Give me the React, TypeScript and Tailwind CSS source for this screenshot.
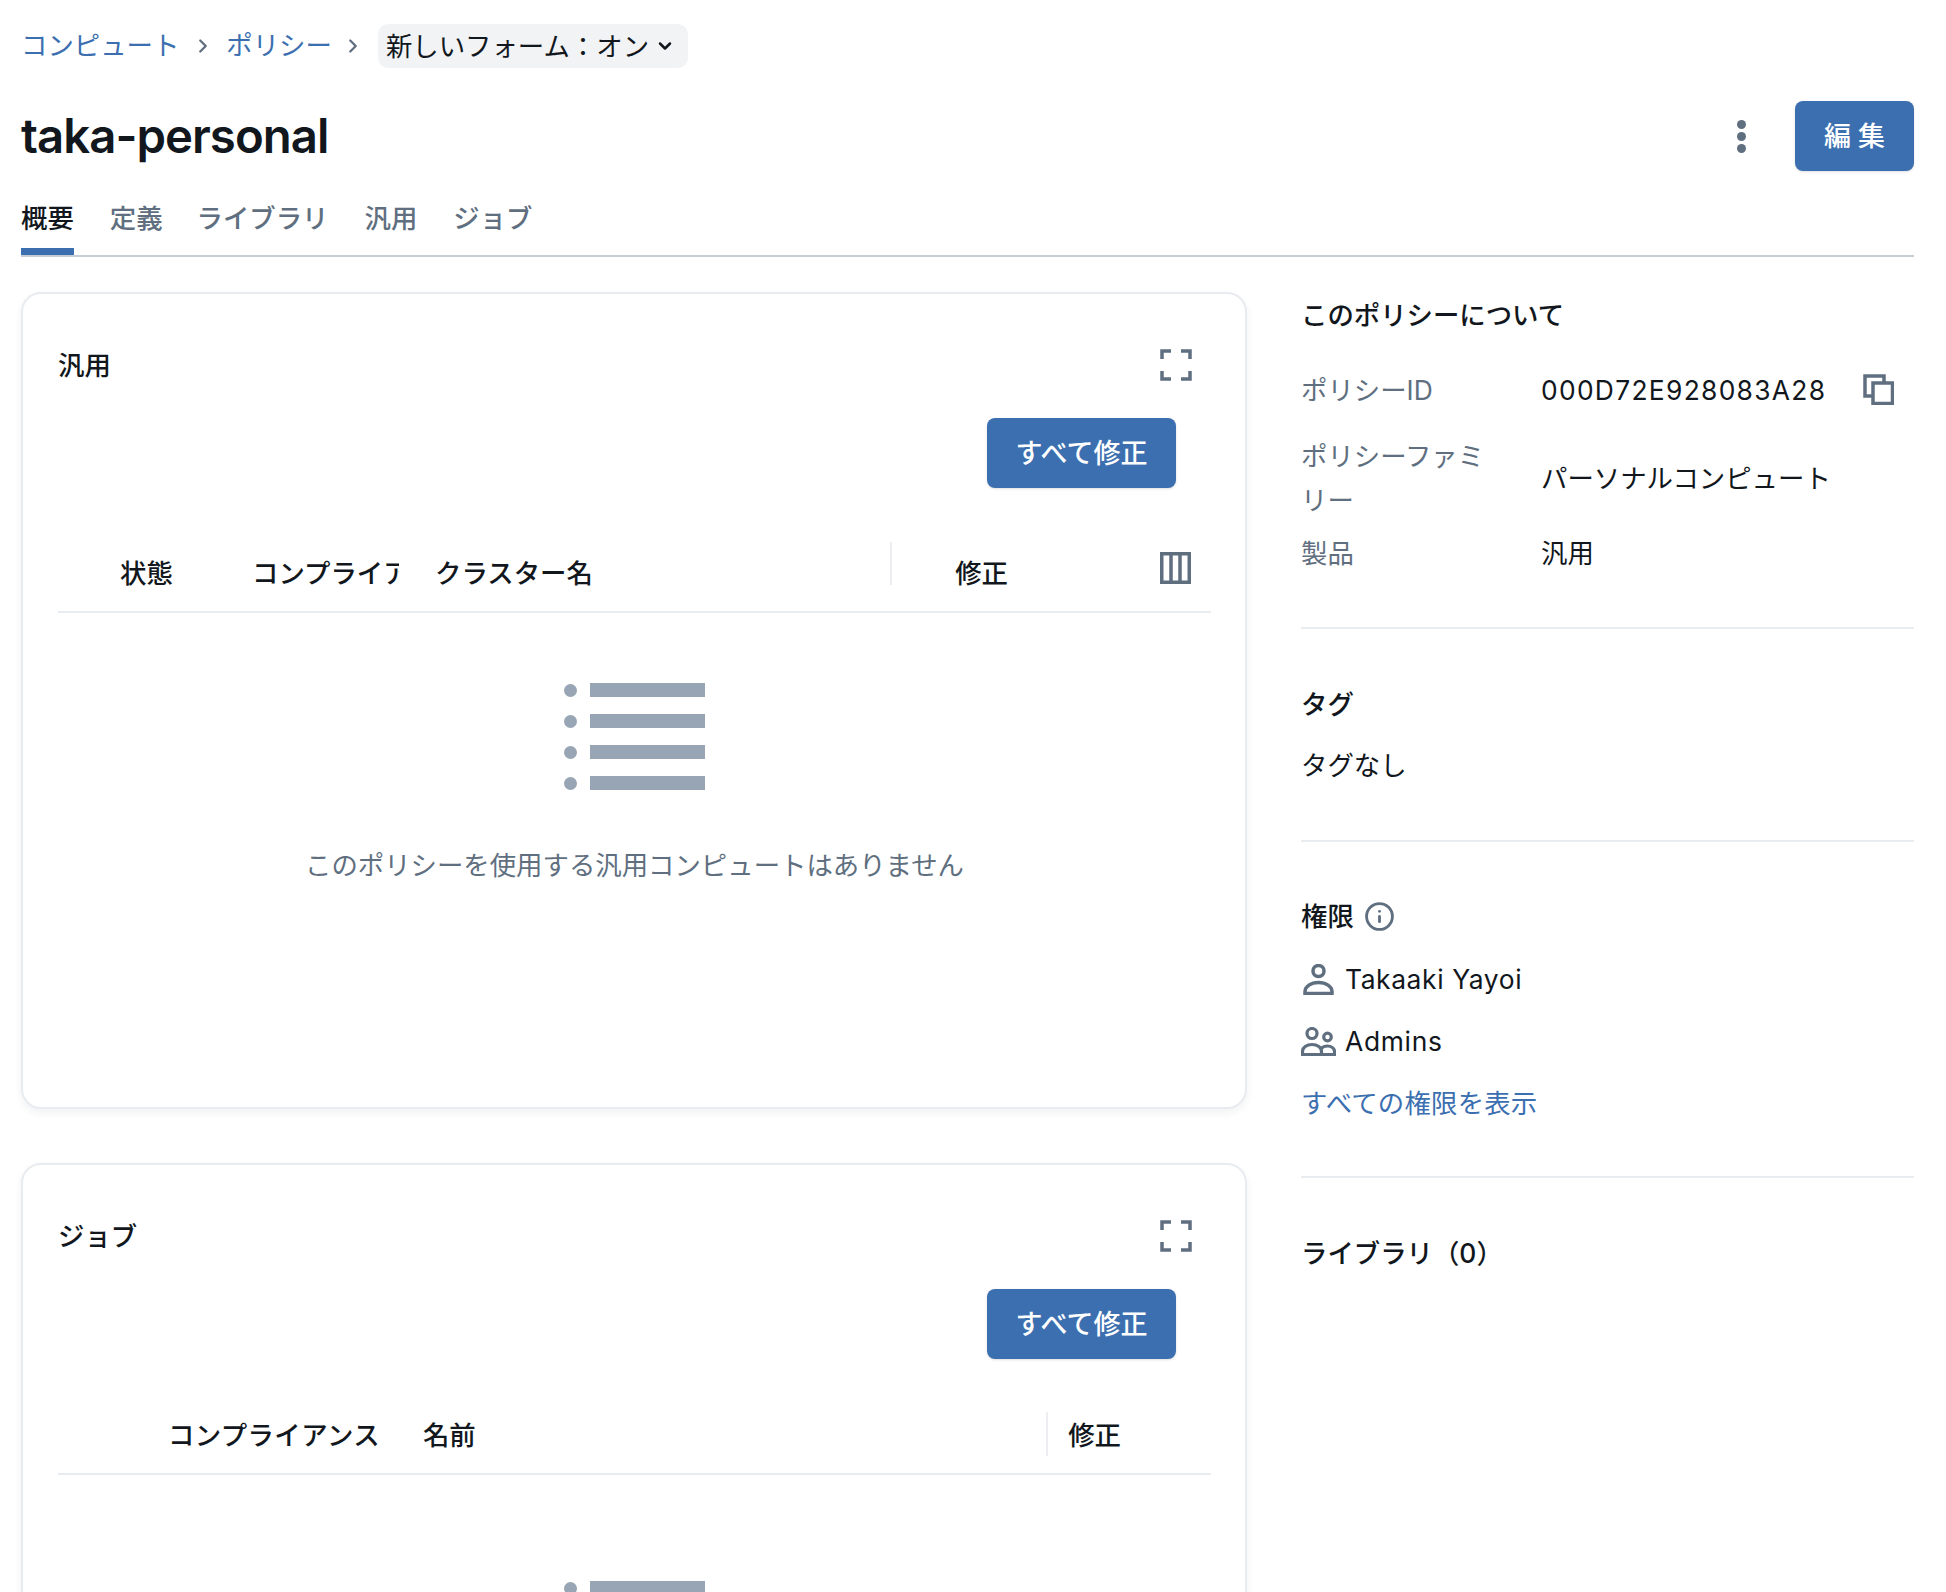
import { ChevronDown, ChevronRight, Info } from 'lucide-react'

const Expand = () => (
  <svg width="32" height="32" viewBox="0 0 32 32" fill="none" stroke="#5f6f80" strokeWidth="3.5">
    <path d="M2 10V2h9M21 2h9v8M30 22v8h-9M11 30H2v-8" />
  </svg>
)

const Columns = () => (
  <svg width="31" height="32" viewBox="0 0 31 32" fill="none" stroke="#5f6f80" strokeWidth="3.5">
    <rect x="1.75" y="1.75" width="27.5" height="28.5" />
    <path d="M11 2v28M20 2v28" />
  </svg>
)

const Copy = () => (
  <svg width="31" height="31" viewBox="0 0 31 31" fill="none" stroke="#5f6f80" strokeWidth="3.5">
    <path d="M9 22H2V2h19v7" />
    <rect x="10" y="9" width="19.5" height="20.5" />
  </svg>
)

const Person = () => (
  <svg width="31" height="31" viewBox="0 0 31 31" fill="none" stroke="#5f6f80" strokeWidth="3.5">
    <circle cx="15.5" cy="7" r="5.5" />
    <path d="M2 29.5v-2c0-5 6-9 13.5-9s13.5 4 13.5 9v2z" />
  </svg>
)

const Group = () => (
  <svg width="35" height="29" viewBox="0 0 35 29" fill="none" stroke="#5f6f80" strokeWidth="3.2">
    <circle cx="11" cy="6.5" r="5" />
    <circle cx="26.5" cy="10" r="3.8" />
    <path d="M1.5 27.5v-3c0-4 4-7 9.5-7s9.5 3 9.5 7v3z" />
    <path d="M20.5 27.5h13v-3c0-3-3-5.500-7-5.500-3 0-5 1-6.500 2.500" />
  </svg>
)

function EmptyList({ className, text }: { className: string; text: string }) {
  return (
    <div className={`flex flex-col items-center ${className}`}>
      <div className="flex flex-col gap-[17px]">
        {[0, 1, 2, 3].map((i) => (
          <div key={i} className="flex items-center gap-[13px]">
            <div className="w-[13px] h-[13px] rounded-full bg-[#97a5b4]" />
            <div className="w-[115px] h-[14px] bg-[#97a5b4]" />
          </div>
        ))}
      </div>
      <p className="mt-[53px] text-[#5f6f80]">{text}</p>
    </div>
  )
}

function Card({
  title,
  headClass,
  buttonClass,
  children,
}: {
  title: string
  headClass: string
  buttonClass: string
  children: React.ReactNode
}) {
  return (
    <section className="bg-white border-2 border-[#e8ebef] rounded-[20px] shadow-[0_4px_8px_rgba(20,40,70,0.06)] pl-[35px] pr-[34px] pb-[220px]">
      <div className={`flex items-center justify-between h-[44px] pr-[19px] ${headClass}`}>
        <h2 className="font-medium">{title}</h2>
        <Expand />
      </div>
      <div className={`flex justify-end pr-[35px] ${buttonClass}`}>
        <button className="w-[189px] h-[70px] pt-[2px] rounded-lg bg-[#3c6fb0] text-white text-[27px] font-medium shadow-sm">
          すべて修正
        </button>
      </div>
      {children}
    </section>
  )
}

export default function App() {
  return (
    <div className="h-[1592px] overflow-hidden bg-white pl-[21px] pr-[32px] pt-[24px] text-[26.4px] leading-[44px] text-[#11171c] font-['Inter','Noto_Sans_CJK_JP',sans-serif]">
      {/* Breadcrumb */}
      <nav className="flex items-center h-[44px]">
        <a className="text-[#3c6fb0] -mt-[2px]">コンピュート</a>
        <ChevronRight size={22} strokeWidth={2.5} className="ml-[13px] mr-[12px] text-[#5f6f80]" />
        <a className="text-[#3c6fb0] -mt-[2px]">ポリシー</a>
        <ChevronRight size={22} strokeWidth={2.5} className="ml-[10px] mr-[14px] text-[#5f6f80]" />
        <div className="flex items-center h-[44px] w-[310px] pl-[8px] pb-[1px] rounded-[10px] bg-[#f1f3f5]">
          新しいフォーム：オン
          <ChevronDown size={20} strokeWidth={3} className="ml-[6px]" />
        </div>
      </nav>

      {/* Title */}
      <div className="flex items-center justify-between h-[70px] mt-[33px]">
        <h1 className="text-[47.3px] font-semibold tracking-[-0.02em]">taka-personal</h1>
        <div className="flex items-center">
          <div className="flex flex-col gap-[3px] mr-[49px]">
            <div className="w-[9px] h-[9px] rounded-full bg-[#5f6f80]" />
            <div className="w-[9px] h-[9px] rounded-full bg-[#5f6f80]" />
            <div className="w-[9px] h-[9px] rounded-full bg-[#5f6f80]" />
          </div>
          <button className="w-[119px] h-[70px] pt-[2px] rounded-lg bg-[#3c6fb0] text-white text-[27px] font-medium shadow-sm">
            編 集
          </button>
        </div>
      </div>

      {/* Tabs */}
      <div className="flex gap-9 mt-[25px] border-b-2 border-[#c5ced8] font-medium">
        <div className="h-[59px] border-b-[7px] border-[#3c6fb0]">概要</div>
        <div className="h-[59px] text-[#5f6f80]">定義</div>
        <div className="h-[59px] -ml-[2px] text-[#5f6f80]">ライブラリ</div>
        <div className="h-[59px] text-[#5f6f80]">汎用</div>
        <div className="h-[59px] text-[#5f6f80]">ジョブ</div>
      </div>

      <div className="flex gap-[54px] mt-[35px]">
        {/* Left column */}
        <div className="w-[1226px] shrink-0 flex flex-col gap-[54px]">
          <Card title="汎用" headClass="mt-[49px]" buttonClass="mt-[31px]">
            <div className="flex items-start h-[71px] mt-[54px] border-b-2 border-[#e8ebef] font-medium">
              <div className="w-[194px] pl-[62px] mt-[9px]">状態</div>
              <div className="w-[147px] overflow-hidden whitespace-nowrap mt-[9px]">コンプライアンス</div>
              <div className="flex-1 ml-[36px] mt-[9px]">クラスター名</div>
              <div className="w-[2px] h-[43px] bg-[#eceef1]" />
              <div className="ml-[63px] mt-[9px]">修正</div>
              <div className="ml-[152px] mr-[20px] mt-[10px]">
                <Columns />
              </div>
            </div>
            <EmptyList className="mt-[70px]" text="このポリシーを使用する汎用コンピュートはありません" />
          </Card>
          <Card title="ジョブ" headClass="mt-[49px]" buttonClass="mt-[31px]">
            <div className="flex items-start h-[63px] mt-[53px] border-b-2 border-[#e8ebef] font-medium">
              <div className="ml-[110px] mt-[1px] tracking-[0.4px]">コンプライアンス</div>
              <div className="flex-1 ml-[43px] mt-[1px]">名前</div>
              <div className="w-[2px] h-[44px] bg-[#eceef1]" />
              <div className="ml-[20px] mr-[90px] mt-[1px]">修正</div>
            </div>
            <EmptyList className="mt-[106px]" text="このポリシーを使用するジョブはありません" />
          </Card>
        </div>

        {/* Right column */}
        <aside className="flex-1 pt-[1px]">
          <section className="pb-[52px] border-b-2 border-[#e8ebef]">
            <h3 className="font-medium">このポリシーについて</h3>
            <div className="flex items-center mt-[31px]">
              <div className="w-[205px] mr-[35px] text-[#5f6f80]">ポリシーID</div>
              <div className="flex-1 tracking-[1.3px]">000D72E928083A28</div>
              <div className="mr-[20px] -mt-[2px]">
                <Copy />
              </div>
            </div>
            <div className="flex items-center mt-[22px]">
              <div className="w-[205px] mr-[35px] text-[#5f6f80]">ポリシーファミリー</div>
              <div>パーソナルコンピュート</div>
            </div>
            <div className="flex items-center mt-[9px]">
              <div className="w-[205px] mr-[35px] text-[#5f6f80]">製品</div>
              <div>汎用</div>
            </div>
          </section>

          <section className="pt-[53px] pb-[53px] border-b-2 border-[#e8ebef]">
            <h3 className="font-medium">タグ</h3>
            <p className="mt-[17px]">タグなし</p>
          </section>

          <section className="pt-[52px] pb-[51px] border-b-2 border-[#e8ebef]">
            <div className="flex items-center gap-[10px]">
              <h3 className="font-medium">権限</h3>
              <Info size={31} strokeWidth={2.2} className="text-[#5f6f80]" />
            </div>
            <div className="flex flex-col gap-[18px] mt-[19px]">
              <div className="flex items-center tracking-[0.6px]">
                <div className="w-[44px] pl-[2px]">
                  <Person />
                </div>
                Takaaki Yayoi
              </div>
              <div className="flex items-center tracking-[0.7px]">
                <div className="w-[44px]">
                  <Group />
                </div>
                Admins
              </div>
              <a className="text-[#3c6fb0] tracking-[0.2px]">すべての権限を表示</a>
            </div>
          </section>

          <section className="pt-[53px]">
            <h3 className="font-medium">ライブラリ（0）</h3>
          </section>
        </aside>
      </div>
    </div>
  )
}
